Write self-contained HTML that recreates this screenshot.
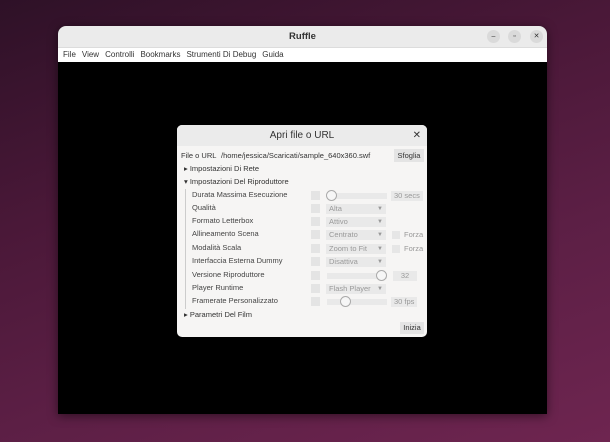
<!DOCTYPE html>
<html><head><meta charset="utf-8"><style>
*{margin:0;padding:0;box-sizing:border-box}
body{width:610px;height:442px;overflow:hidden;position:relative;font-family:"Liberation Sans","DejaVu Sans",sans-serif;
background:linear-gradient(160deg,#2e1127 0%,#4a1838 35%,#5c1f45 65%,#6e2550 100%);}
.a{position:absolute}
.win{left:58px;top:26px;width:489px;height:388px;border-radius:8px 8px 0 0;overflow:hidden;background:#000;box-shadow:0 2px 10px rgba(0,0,0,.5)}
.tb{left:0;top:0;width:489px;height:22px;background:#ebebeb;border-bottom:1px solid #dcdcdc}
.mn{left:0;top:22px;width:489px;height:14px;background:#fff;font-size:8px;color:#333;line-height:14px}
.mn span{margin-left:5px;margin-right:1px}
.cb{width:13px;height:13px;border-radius:50%;background:#dadada;font-size:7px;color:#333;text-align:center;line-height:13px;top:4px}
.dlg{left:177px;top:125px;width:250px;height:212px;background:#f6f5f4;border-radius:5px;font-size:7.5px;color:#333;overflow:hidden;box-shadow:0 1px 4px rgba(0,0,0,.4)}
.dh{left:0;top:0;width:250px;height:21px;background:#ebebeb;text-align:center;font-size:10px;line-height:21px;color:#333}
.r{position:absolute;left:15px;font-size:7.5px;color:#444}
.ck{position:absolute;left:134px;width:9px;height:9px;background:#e4e4e4}
.dd{position:absolute;left:149px;width:60px;height:10px;background:#e9e9e9;color:#999;font-size:7.5px;line-height:10px;padding-left:3px}
.dd:after{content:"▼";position:absolute;right:3px;font-size:6px;color:#999}
.sl{position:absolute;left:150px;width:60px;height:6px;background:#e9e9e9}
.kn{position:absolute;width:11px;height:11px;border-radius:50%;border:1px solid #aaa;background:#f6f6f6}
.vb{position:absolute;left:214px;height:10px;background:#e9e9e9;color:#999;font-size:7.5px;line-height:10px;padding:0 3px}
.fz{position:absolute;left:215px;width:8px;height:8px;background:#e6e6e6}
.fzt{position:absolute;left:227px;color:#999;font-size:7.5px}
</style></head><body>
<div class="a win">
 <div class="a tb"><div class="a" style="left:0;width:489px;text-align:center;top:5px;font-size:9.5px;font-weight:bold;color:#333">Ruffle</div>
  <div class="a cb" style="left:429px">–</div><div class="a cb" style="left:450px">▫</div><div class="a cb" style="left:472px">✕</div></div>
 <div class="a mn"><span>File</span><span>View</span><span>Controlli</span><span>Bookmarks</span><span>Strumenti Di Debug</span><span>Guida</span></div>
</div>
<div class="a dlg">
 <div class="a dh">Apri file o URL<span style="position:absolute;right:6px;font-size:10px">✕</span></div>
 <div class="a" style="left:4px;top:26px">File o URL</div>
 <div class="a" style="left:44px;top:26px;color:#333">/home/jessica/Scaricati/sample_640x360.swf</div>
 <div class="a" style="left:217px;top:24px;width:30px;height:13px;background:#e4e4e4;text-align:center;line-height:13px">Sfoglia</div>
 <div class="a" style="left:7px;top:39px">▸ Impostazioni Di Rete</div>
 <div class="a" style="left:7px;top:52px">▾ Impostazioni Del Riproduttore</div>
 <div class="a" style="left:8px;top:64px;width:1px;height:120px;background:#ccc"></div>

 <div class="r" style="top:65px">Durata Massima Esecuzione</div><div class="ck" style="top:66px"></div>
 <div class="sl" style="top:68px"></div><div class="kn" style="left:149px;top:65px"></div><div class="vb" style="top:66px">30 secs</div>

 <div class="r" style="top:78px">Qualità</div><div class="ck" style="top:79px"></div><div class="dd" style="top:79px">Alta</div>
 <div class="r" style="top:91px">Formato Letterbox</div><div class="ck" style="top:92px"></div><div class="dd" style="top:92px">Attivo</div>
 <div class="r" style="top:104px">Allineamento Scena</div><div class="ck" style="top:105px"></div><div class="dd" style="top:105px">Centrato</div><div class="fz" style="top:106px"></div><div class="fzt" style="top:105px">Forza</div>
 <div class="r" style="top:118px">Modalità Scala</div><div class="ck" style="top:119px"></div><div class="dd" style="top:119px">Zoom to Fit</div><div class="fz" style="top:120px"></div><div class="fzt" style="top:119px">Forza</div>
 <div class="r" style="top:131px">Interfaccia Esterna Dummy</div><div class="ck" style="top:132px"></div><div class="dd" style="top:132px">Disattiva</div>
 <div class="r" style="top:145px">Versione Riproduttore</div><div class="ck" style="top:146px"></div>
 <div class="sl" style="top:148px"></div><div class="kn" style="left:199px;top:145px"></div><div class="vb" style="top:146px;left:216px;width:24px;text-align:center">32</div>
 <div class="r" style="top:158px">Player Runtime</div><div class="ck" style="top:159px"></div><div class="dd" style="top:159px">Flash Player</div>
 <div class="r" style="top:171px">Framerate Personalizzato</div><div class="ck" style="top:172px"></div>
 <div class="sl" style="top:174px"></div><div class="kn" style="left:163px;top:171px"></div><div class="vb" style="top:172px">30 fps</div>

 <div class="a" style="left:7px;top:185px">▸ Parametri Del Film</div>
 <div class="a" style="left:223px;top:197px;width:24px;height:12px;background:#e4e4e4;text-align:center;line-height:12px">Inizia</div>
</div>
</body></html>
